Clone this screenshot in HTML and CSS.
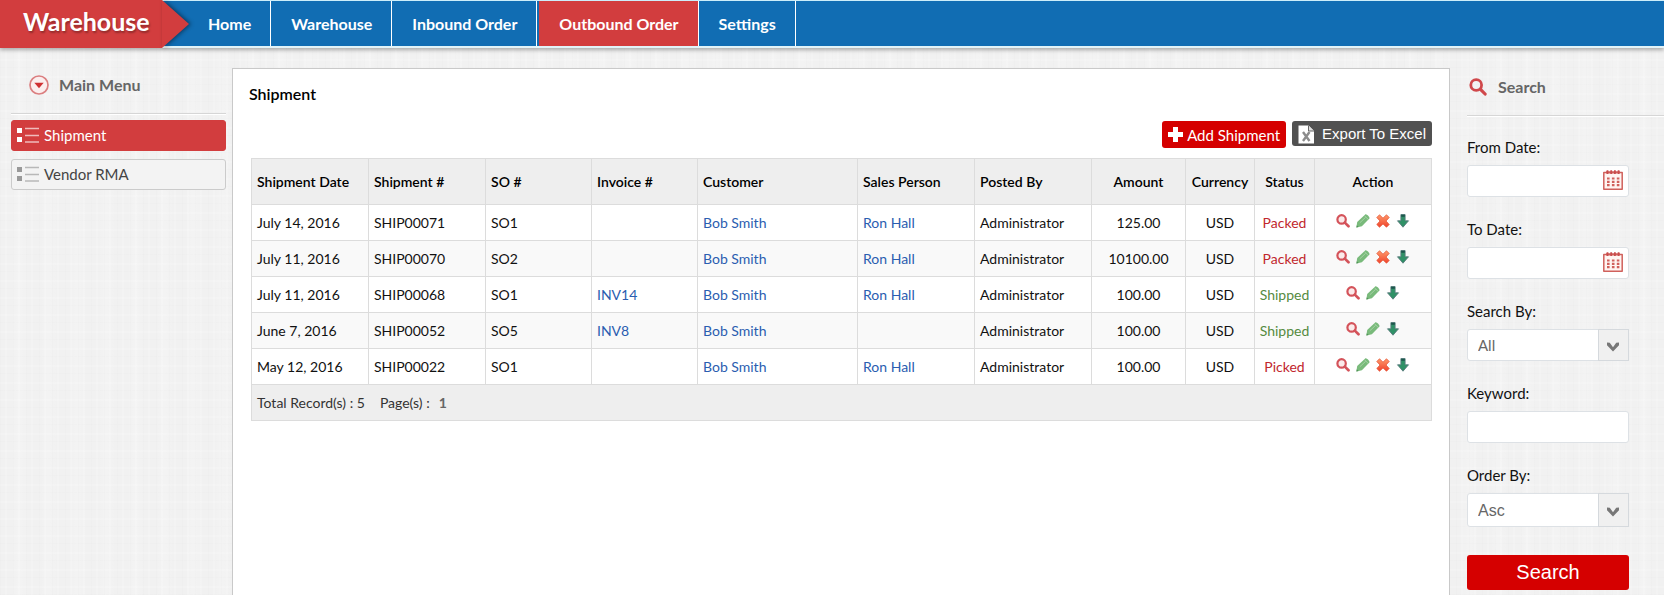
FILE: index.html
```
<!DOCTYPE html>
<html lang="en">
<head>
<meta charset="utf-8">
<title>Warehouse - Shipment</title>
<link rel="stylesheet" href="styles.css">
</head>
<body>
<svg class="defs" aria-hidden="true">
  <defs>
    <linearGradient id="g-x" x1="0" y1="0" x2="0" y2="1"><stop offset="0" stop-color="#ff9a6a"/><stop offset="1" stop-color="#f0432c"/></linearGradient>
    <symbol id="i-find" viewBox="0 0 14 14"><circle cx="5.600" cy="5.400" r="4.200" fill="#fbeaea" stroke="#d4535a" stroke-width="2.200"/><path d="M8.800 8.600l3.700 3.600" stroke="#d4535a" stroke-width="2.700" stroke-linecap="round"/></symbol>
    <symbol id="i-edit" viewBox="0 0 14 14"><path d="M.4 13.600l.8-5.600L9.200.4c1-.7 4.900 2.600 4.200 4L5.900 12.300z" fill="#79ba7b"/><path d="M3.800 8.800l5.800-5.500M8.400 1.700l3.700 3.600" stroke="#a5d3a4" stroke-width="1"/><path d="M.4 13.600l.4-2.300 1.800 1.700z" fill="#4d8f55"/></symbol>
    <symbol id="i-delete" viewBox="0 0 14 14"><path d="M3.500.8L7 4.200 10.500.8l2.700 2.700L10 7l3.200 3.500-2.700 2.700L7 9.900l-3.500 3.300L.8 10.500 4 7 .8 3.500z" fill="url(#g-x)" stroke="#e4583b" stroke-width=".8" stroke-linejoin="round"/></symbol>
    <symbol id="i-down" viewBox="0 0 14 14"><path d="M4.900.6h4.200v6.200H12.500L7 13.200 1.500 6.800h3.400z" fill="#2f9166" stroke="#597b7d" stroke-width=".9" stroke-linejoin="round"/><path d="M5.200.8h3.600v2H5.200z" fill="#1d554c"/></symbol>
    <symbol id="i-list" viewBox="0 0 22 16"><path d="M0 1h5v5H0zM0 10h5v5H0z" fill="currentColor"/><path d="M8 1.500h14M8 8.500h14M8 15h14" stroke="currentColor" stroke-width="1.300" opacity=".65"/></symbol>
    <symbol id="i-calendar" viewBox="0 0 20 20"><path d="M.8 2.500h18.400v16.700H.8z" fill="#fff5f2" stroke="#d0615c" stroke-width="1.500" stroke-linejoin="round"/><path d="M3 2.300h14" stroke="#d0615c" stroke-width="2"/><path d="M4.500.3v3.800M8.200.3v3.800M11.900.3v3.800M15.600.3v3.800" stroke="#c94c4c" stroke-width="1.800"/><path d="M4 8.500h12.500M4 11.800h12.500M4 15.100h12.500" stroke="#d0615c" stroke-width="2.200" stroke-dasharray="2.600 2.300"/></symbol>
    <symbol id="i-chevron" viewBox="0 0 12 10"><path d="M0 .5l2.800.3L6 5.200 9.200.8 12 .5v2.700L6 9.600 0 3.200z" fill="#777"/></symbol>
  </defs>
</svg>

<header class="topbar">
  <a class="brand" href="#"><span class="brand-name">Warehouse</span>
    <svg class="brand-tip" viewBox="0 0 28 48" aria-hidden="true"><path d="M0 0l27 24L0 48z" fill="#d23d3e"/></svg>
  </a>
  <nav class="nav">
    <a href="#">Home</a>
    <a href="#">Warehouse</a>
    <a href="#">Inbound Order</a>
    <a class="current" href="#">Outbound Order</a>
    <a href="#">Settings</a>
  </nav>
</header>

<div class="layout">
  <aside class="sidebar">
    <h2 class="side-title menu-title">
      <svg width="20" height="20" viewBox="0 0 20 20" aria-hidden="true"><circle cx="10" cy="10" r="9" fill="#fbeeee" stroke="#db7f80" stroke-width="1.700"/><path d="M5.300 7.800h9.400L10 13.200z" fill="#cf3133"/></svg>
      Main Menu</h2>
    <ul class="menu">
      <li><a class="current" href="#"><svg width="22" height="16" aria-hidden="true"><use href="#i-list"/></svg>Shipment</a></li>
      <li><a href="#"><svg width="22" height="16" aria-hidden="true"><use href="#i-list"/></svg>Vendor RMA</a></li>
    </ul>
  </aside>

  <main class="panel">
    <h1>Shipment</h1>
    <div class="toolbar">
      <button class="btn add" type="button"><svg width="15" height="15" viewBox="0 0 15 15" aria-hidden="true"><path d="M5 0h5v5h5v5h-5v5H5v-5H0V5h5z" fill="#fff"/></svg>Add Shipment</button>
      <button class="btn export" type="button"><svg width="17" height="19" viewBox="0 0 17 19" aria-hidden="true"><path d="M.5.500h10l5.500 5.500v12.500H.5z" fill="#fff"/><path d="M10.500.500V6H16" fill="#ddd" stroke="#666" stroke-width="1"/><path d="M5 7l6.500 9M11.500 7L5 16" stroke="#8c8c8c" stroke-width="2.400"/></svg>Export To Excel</button>
    </div>
    <table class="grid">
      <colgroup>
        <col class="w-m"><col class="w-m"><col class="w-s"><col class="w-s"><col class="w-l"><col class="w-m"><col class="w-m"><col class="w-amount"><col class="w-currency"><col class="w-status"><col class="w-m">
      </colgroup>
      <thead>
        <tr><th>Shipment Date</th><th>Shipment #</th><th>SO #</th><th>Invoice #</th><th>Customer</th><th>Sales Person</th><th>Posted By</th><th class="c">Amount</th><th class="c">Currency</th><th class="c">Status</th><th class="c">Action</th></tr>
      </thead>
      <tbody>
        <tr><td>July 14, 2016</td><td>SHIP00071</td><td>SO1</td><td></td><td><a href="#">Bob Smith</a></td><td><a href="#">Ron Hall</a></td><td>Administrator</td><td class="c">125.00</td><td class="c">USD</td><td class="c open">Packed</td>
          <td><div class="actions"><a href="#" aria-label="View"><svg><use href="#i-find"/></svg></a><a href="#" aria-label="Edit"><svg><use href="#i-edit"/></svg></a><a href="#" aria-label="Delete"><svg><use href="#i-delete"/></svg></a><a href="#" aria-label="Download"><svg><use href="#i-down"/></svg></a></div></td></tr>
        <tr><td>July 11, 2016</td><td>SHIP00070</td><td>SO2</td><td></td><td><a href="#">Bob Smith</a></td><td><a href="#">Ron Hall</a></td><td>Administrator</td><td class="c">10100.00</td><td class="c">USD</td><td class="c open">Packed</td>
          <td><div class="actions"><a href="#" aria-label="View"><svg><use href="#i-find"/></svg></a><a href="#" aria-label="Edit"><svg><use href="#i-edit"/></svg></a><a href="#" aria-label="Delete"><svg><use href="#i-delete"/></svg></a><a href="#" aria-label="Download"><svg><use href="#i-down"/></svg></a></div></td></tr>
        <tr><td>July 11, 2016</td><td>SHIP00068</td><td>SO1</td><td><a href="#">INV14</a></td><td><a href="#">Bob Smith</a></td><td><a href="#">Ron Hall</a></td><td>Administrator</td><td class="c">100.00</td><td class="c">USD</td><td class="c done">Shipped</td>
          <td><div class="actions"><a href="#" aria-label="View"><svg><use href="#i-find"/></svg></a><a href="#" aria-label="Edit"><svg><use href="#i-edit"/></svg></a><a href="#" aria-label="Download"><svg><use href="#i-down"/></svg></a></div></td></tr>
        <tr><td>June 7, 2016</td><td>SHIP00052</td><td>SO5</td><td><a href="#">INV8</a></td><td><a href="#">Bob Smith</a></td><td></td><td>Administrator</td><td class="c">100.00</td><td class="c">USD</td><td class="c done">Shipped</td>
          <td><div class="actions"><a href="#" aria-label="View"><svg><use href="#i-find"/></svg></a><a href="#" aria-label="Edit"><svg><use href="#i-edit"/></svg></a><a href="#" aria-label="Download"><svg><use href="#i-down"/></svg></a></div></td></tr>
        <tr><td>May 12, 2016</td><td>SHIP00022</td><td>SO1</td><td></td><td><a href="#">Bob Smith</a></td><td><a href="#">Ron Hall</a></td><td>Administrator</td><td class="c">100.00</td><td class="c">USD</td><td class="c open">Picked</td>
          <td><div class="actions"><a href="#" aria-label="View"><svg><use href="#i-find"/></svg></a><a href="#" aria-label="Edit"><svg><use href="#i-edit"/></svg></a><a href="#" aria-label="Delete"><svg><use href="#i-delete"/></svg></a><a href="#" aria-label="Download"><svg><use href="#i-down"/></svg></a></div></td></tr>
      </tbody>
      <tfoot>
        <tr><td colspan="11"><span class="total">Total Record(s) : 5</span><span>Page(s) :&nbsp; <b>1</b></span></td></tr>
      </tfoot>
    </table>
  </main>

  <aside class="search">
    <h2 class="side-title search-title"><svg width="18" height="18" viewBox="0 0 18 18" aria-hidden="true"><circle cx="7.200" cy="7" r="5.400" fill="none" stroke="#d0484b" stroke-width="2.800"/><path d="M11.500 11.300l4.600 4.700" stroke="#d0484b" stroke-width="3.200" stroke-linecap="round"/></svg>Search</h2>
    <form class="filters">
      <div class="field"><label for="from">From Date:</label><div class="control"><input id="from" type="text"><svg class="cal" aria-hidden="true"><use href="#i-calendar"/></svg></div></div>
      <div class="field"><label for="to">To Date:</label><div class="control"><input id="to" type="text"><svg class="cal" aria-hidden="true"><use href="#i-calendar"/></svg></div></div>
      <div class="field"><label for="by">Search By:</label><div class="control"><select id="by"><option>All</option></select><span class="drop"><svg width="12" height="10" aria-hidden="true"><use href="#i-chevron"/></svg></span></div></div>
      <div class="field"><label for="kw">Keyword:</label><div class="control"><input id="kw" type="text"></div></div>
      <div class="field"><label for="order">Order By:</label><div class="control"><select id="order" class="tall"><option>Asc</option></select><span class="drop"><svg width="12" height="10" aria-hidden="true"><use href="#i-chevron"/></svg></span></div></div>
      <button class="go" type="button">Search</button>
    </form>
  </aside>
</div>
</body>
</html>
```
FILE: styles.css
```
* { box-sizing: border-box; }

body {
  margin: 0;
  min-height: 100vh;
  display: flex;
  flex-direction: column;
  font: 14px/20px Lato, "Liberation Sans", sans-serif;
  color: #111;
  background-color: #f1f1f1;
  background-image:
    repeating-linear-gradient(90deg, rgba(0,0,0,.008) 0 1px, transparent 1px 5px, rgba(255,255,255,.16) 5px 7px, transparent 7px 13px),
    repeating-linear-gradient(90deg, transparent 0 11px, rgba(255,255,255,.18) 19px, transparent 29px),
    repeating-linear-gradient(0deg, rgba(0,0,0,.008) 0 1px, transparent 1px 7px, rgba(255,255,255,.16) 7px 9px, transparent 9px 17px);
}

a { text-decoration: none; color: #2a5db0; }
.defs { position: absolute; width: 0; height: 0; }

/* Top bar */
.topbar {
  display: flex;
  height: 48px;
  background: #116db3;
  border-top: 1px solid #cdeefa;
  border-bottom: 2px solid #e2f3f8;
  box-shadow: 0 2px 4px rgba(0,0,0,.3);
}
.brand {
  position: relative;
  width: 162px;
  height: 48px;
  margin-top: -1px;
  padding-left: 23px;
  background: #d23d3e;
  color: #fff;
  font-size: 25px;
  font-weight: 700;
  line-height: 42px;
  text-shadow: 1px 2px 2px rgba(0,0,0,.3);
}
.brand-tip {
  position: absolute;
  left: 100%;
  top: 0;
  width: 28px;
  height: 48px;
  filter: drop-shadow(2px 0 2px rgba(0,0,0,.45));
}
.nav { display: flex; margin-left: 26px; }
.nav a {
  padding: 0 19px 0 20px;
  border-right: 1px solid #fff;
  color: #fff;
  font-size: 16px;
  font-weight: 700;
  line-height: 46px;
}
.nav .current { background: #d23d3e; margin-left: 2px; }

/* Columns */
.layout {
  flex: 1;
  display: grid;
  grid-template-columns: 215px minmax(0, 1fr) 197px;
  padding-left: 11px;
}

.side-title {
  display: flex;
  align-items: center;
  margin: 0;
  height: 48px;
  font-size: 16px;
  font-weight: 700;
  color: #666;
  border-bottom: 1px solid #d6d6d6;
  box-shadow: 0 1px 0 #fff;
}
.sidebar { padding-top: 18px; }
.menu-title { gap: 10px; padding: 0 0 10px 18px; }
.menu { list-style: none; margin: 6px 0 0; padding: 0; display: grid; gap: 8px; }
.menu a {
  display: flex;
  align-items: center;
  gap: 5px;
  height: 31px;
  padding: 0 0 1px 5px;
  border: 1px solid #cbcbcb;
  border-radius: 3px;
  background: #f3f3f3;
  color: #444;
  font-size: 15px;
}
.menu svg { color: #999; }
.menu .current { background: #d23d3e; border-color: #d23d3e; color: #fff; }
.menu .current svg { color: #fff; }

/* Main panel */
.panel {
  margin: 20px 17px 0 6px;
  padding: 15px 17px 0 18px;
  background: #fff;
  border: 1px solid #c9c9c9;
  border-bottom: 0;
}
.panel h1 { margin: 0 -2px; font-size: 16px; line-height: 20px; font-weight: 600; color: #000; }
.toolbar { display: flex; justify-content: flex-end; align-items: flex-start; gap: 6px; height: 37px; margin-top: 17px; }
.btn {
  display: flex;
  align-items: center;
  border: 0;
  border-radius: 3px;
  padding: 0 6px;
  color: #fff;
  font-size: 15px;
}
.add { gap: 4px; height: 27px; background: #d50000; font-family: Lato, sans-serif; }
.export { gap: 7px; height: 25px; background: #515151; font-family: "Liberation Sans", Arial, sans-serif; }
.export svg { margin-top: 2px; }

.grid { width: 100%; table-layout: fixed; border-collapse: collapse; }
.w-s { width: 106px; }
.w-m { width: 117px; }
.w-l { width: 160px; }
.w-amount { width: 94px; }
.w-currency { width: 69px; }
.w-status { width: 60px; }
.grid th, .grid td { height: 36px; padding: 0 0 0 5px; border: 1px solid #dcdcdc; text-align: left; white-space: nowrap; }
.grid th { height: 46px; background: #eee; font-weight: 600; color: #000; }
.grid tbody tr:nth-child(even) { background: #f9f9f9; }
.grid .c { text-align: center; padding: 0; }
.grid .open { color: #c1272d; }
.grid .done { color: #558b3f; }
.grid tfoot td { background: #eee; color: #333; }
.total { margin-right: 15px; }
.grid tfoot b { margin-left: 2px; color: #666; }
.actions { display: flex; justify-content: center; gap: 6px; padding: 0 5px 3px 0; }
.actions svg { display: block; width: 14px; height: 14px; }

/* Search column */
.search { padding-top: 20px; }
.search-title { gap: 11px; padding: 0 0 10px 2px; }
.filters { width: 162px; padding-top: 21px; }
.field { margin-bottom: 22px; }
.field label { display: block; margin-bottom: 8px; font-size: 15px; }
.control { position: relative; }
.field input, .field select {
  display: block;
  width: 100%;
  height: 32px;
  margin: 0;
  padding: 0 10px;
  border: 1px solid #dde1e5;
  border-radius: 3px;
  background: #fff;
  color: #666;
  font: 15px Lato, sans-serif;
}
.field select { appearance: none; }
.field .tall { height: 34px; font: 16px "Liberation Sans", Arial, sans-serif; }
.cal { position: absolute; right: 6px; top: 5px; width: 20px; height: 20px; }
.drop {
  position: absolute;
  inset: 0 0 0 auto;
  width: 31px;
  display: grid;
  place-items: center;
  padding: 3px 2px 0 0;
  border: 1px solid #d5d9dd;
  background: #f0f0f0;
  pointer-events: none;
}
.go {
  display: block;
  width: 100%;
  height: 35px;
  margin-top: 28px;
  border: 0;
  border-radius: 3px;
  background: #d50000;
  color: #fff;
  font: 20px "Liberation Sans", Arial, sans-serif;
}
```
